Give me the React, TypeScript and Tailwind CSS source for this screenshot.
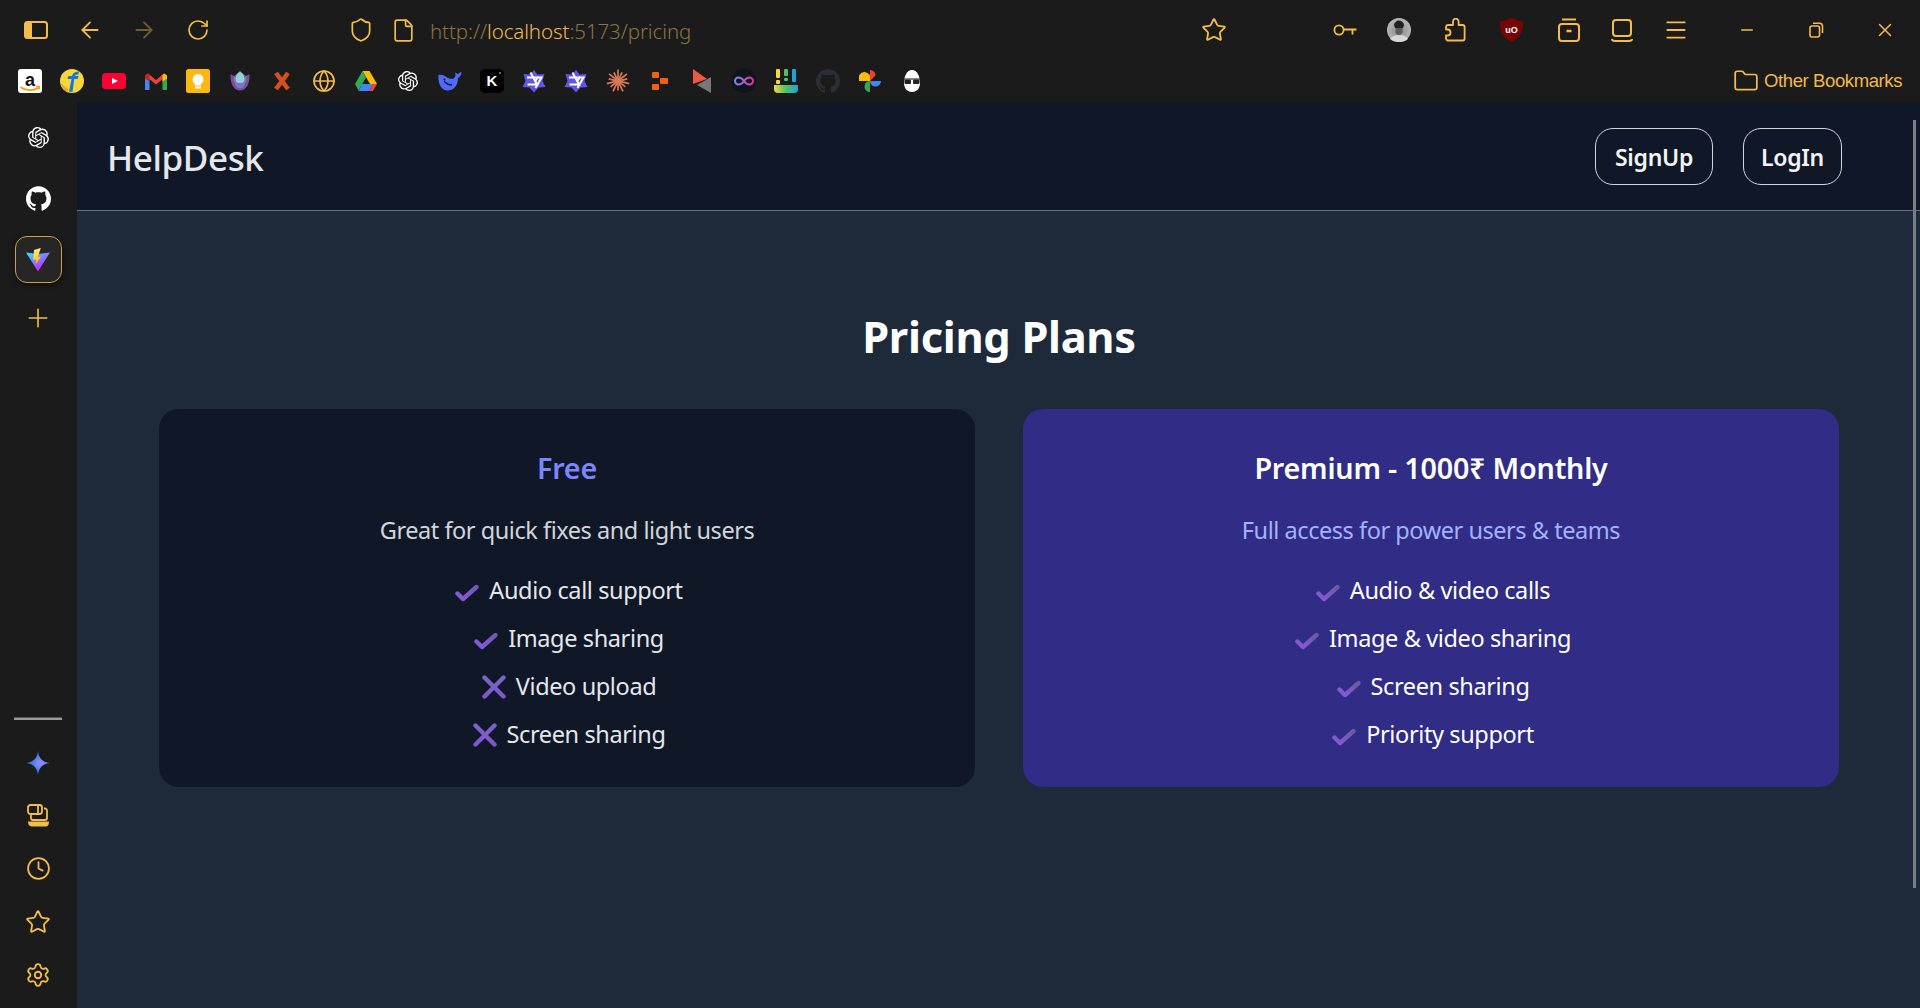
import React from "react";
import { ArrowLeft, ArrowRight, RotateCw, Shield, File, Star, Menu, Minus, X, Folder, Plus, Clock, Settings, Globe } from "lucide-react";
import { SiOpenai, SiGithub } from "react-icons/si";

const GOLD = "#f4bc4b";

function Slot({ w, children }: { w: string; children: React.ReactNode }) {
  return <div className={`${w} flex h-full shrink-0 items-center justify-center`}>{children}</div>;
}

function PanelIcon() {
  return (
    <svg width="24" height="18" viewBox="0 0 24 18" fill="none">
      <rect x="1" y="1" width="22" height="16" rx="2.5" stroke={GOLD} strokeWidth="2" />
      <rect x="1" y="1" width="7" height="16" rx="1.5" fill={GOLD} />
    </svg>
  );
}

function KeyIcon() {
  return (
    <svg width="24" height="12" viewBox="0 0 24 12" fill="none" stroke={GOLD} strokeWidth="1.8">
      <circle cx="6" cy="6" r="4.6" />
      <path d="M10.6 5.5H23.5M19.5 5.5V10.5" />
    </svg>
  );
}

function PuzzleIcon() {
  return (
    <svg width="21" height="24" viewBox="0 0 21 24" fill="none" stroke={GOLD} strokeWidth="1.800" strokeLinejoin="round">
      <path d="M8 7V3.500a2.800 2.800 0 0 1 5.600 0V7h4a2 2 0 0 1 2 2v11.500a2 2 0 0 1-2 2H3a2 2 0 0 1-2-2V17.500h1.500a3 3 0 0 0 0-6H1V9a2 2 0 0 1 2-2z" />
    </svg>
  );
}

function Avatar() {
  return (
    <svg width="24" height="24" viewBox="0 0 24 24">
      <defs>
        <radialGradient id="av" cx="50%" cy="55%" r="60%">
          <stop offset="0%" stopColor="#8a8a8a" />
          <stop offset="100%" stopColor="#bdbdbd" />
        </radialGradient>
      </defs>
      <circle cx="12" cy="12" r="12" fill="url(#av)" />
      <path d="M7 7c1-6 9-6 10 0l-1 3H8z" fill="#222" />
      <path d="M8.500 10h7v5l-3.500 3-3.500-3z" fill="#5d5d5d" />
      <path d="M3 21c2-3 5-4 9-4s7 1 9 4c-4 4-14 4-18 0z" fill="#d8d8d8" />
    </svg>
  );
}

function UBlock() {
  return (
    <svg width="23" height="24" viewBox="0 0 23 24">
      <path d="M11.500 0 23 4c0 9-2 15-11.500 20C2 19 0 13 0 4z" fill="#7a0505" />
      <text x="11.500" y="14.500" textAnchor="middle" fontSize="9" fontWeight="700" fill="#fff" fontFamily="Liberation Sans, sans-serif">uO</text>
    </svg>
  );
}

function ArchiveIcon() {
  return (
    <svg width="24" height="24" viewBox="0 0 24 24" fill="none" stroke={GOLD} strokeWidth="2">
      <path d="M5 1.500h14" />
      <path d="M5 6h14a3 3 0 0 1 3 3v11a3 3 0 0 1-3 3H5a3 3 0 0 1-3-3V9a3 3 0 0 1 3-3z" />
      <path d="M9.500 13h5" strokeWidth="2.500" />
    </svg>
  );
}

function TabletIcon() {
  return (
    <svg width="22" height="23" viewBox="0 0 22 23" fill="none" stroke={GOLD} strokeWidth="2">
      <rect x="2" y="1" width="18" height="16" rx="3" />
      <path d="M1 20c0 1 1 2 3 2h14c2 0 3-1 3-2" />
    </svg>
  );
}

function Restore() {
  return (
    <svg width="15" height="16" viewBox="0 0 15 16" fill="none" stroke={GOLD} strokeWidth="1.600">
      <rect x="1" y="4" width="9.500" height="11" rx="2" />
      <path d="M4 1.200h6.500a3 3 0 0 1 3 3V11" />
    </svg>
  );
}

/* ---- bookmarks ---- */
function Amazon() {
  return (
    <svg width="24" height="24" viewBox="0 0 24 24">
      <rect width="24" height="24" rx="3" fill="#fff" />
      <text x="12" y="16.500" textAnchor="middle" fontSize="18" fontWeight="700" fill="#111" fontFamily="Liberation Sans, sans-serif">a</text>
      <path d="M3 18.500c5 3.500 12 3.500 17 .5" fill="none" stroke="#f90" strokeWidth="1.800" strokeLinecap="round" />
      <path d="M18 17.500h3.200v3" fill="none" stroke="#f90" strokeWidth="1.300" />
    </svg>
  );
}
function Flipkart() {
  return (
    <svg width="24" height="24" viewBox="0 0 24 24">
      <circle cx="12" cy="12" r="12" fill="#fbd63a" />
      <path d="M0.500 14A12 12 0 0 0 8 23.500L8 20 z" fill="#d8b030" />
      <path d="M9 22.500 11.500 10H7.500L8.300 7H12c.8-3 3-4.500 7-4.500l-.6 3c-2 0-3 .5-3.400 1.500h3.500l-.7 3h-3.500L12.500 23z" fill="#1677d9" />
    </svg>
  );
}
function YouTube() {
  return (
    <svg width="24" height="16" viewBox="0 0 24 16">
      <rect width="24" height="16" rx="3.500" fill="#ff0033" />
      <path d="M10 5 16 8l-6 3z" fill="#fff" />
    </svg>
  );
}
function Gmail() {
  return (
    <svg width="22" height="17" viewBox="0 0 22 17">
      <path d="M0 2.500V17h4.500V6z" fill="#4285f4" />
      <path d="M22 2.500V17h-4.500V6z" fill="#34a853" />
      <path d="M0 2.500 3 .5 11 7l8-6.500 3 2L11 11.500z" fill="#ea4335" />
      <path d="M19 .5l3 2v3l-4.500 3V2z" fill="#fbbc04" />
      <path d="M3 .5 0 2.500v3l4.500 3V2z" fill="#c5221f" />
    </svg>
  );
}
function Keep() {
  return (
    <svg width="24" height="24" viewBox="0 0 24 24">
      <rect width="24" height="24" rx="2.500" fill="#fbb80f" />
      <path d="M12 5a5.500 5.500 0 0 1 3 10v1.500H9V15a5.500 5.500 0 0 1 3-10z" fill="#fff" />
      <rect x="9" y="17.500" width="6" height="2" fill="#fff" />
    </svg>
  );
}
function Tulip() {
  return (
    <svg width="20" height="20" viewBox="0 0 20 20">
      <path d="M0.500 3c-.5 9 3 16.500 9.500 16.500S20 12 19.500 3L16 5 10 0 4 5z" fill="#7a4f98" />
      <path d="M3.500 5c0 7 2.500 12.500 6.500 12.500S16.500 12 16.500 5L14 7 10 1 6 7z" fill="#7f74c6" />
      <path d="M10 0.500c4 3 5.500 6.500 3.800 10-1 2-6.600 2-7.600 0C4.500 7 6 3.500 10 .5z" fill="#8fd2d4" />
    </svg>
  );
}
function XMark() {
  return (
    <svg width="18" height="18" viewBox="0 0 18 18">
      <path d="M3 1 15 17M15 1 3 17" stroke="#d4501f" strokeWidth="4.500" fill="none" />
    </svg>
  );
}
function Drive() {
  return (
    <svg width="22" height="20" viewBox="0 0 22 20">
      <path d="M7.500 0h7l7.500 13h-7z" fill="#fbbc04" />
      <path d="M7.500 0 0 13l3.500 6.500L11 6.500z" fill="#34a853" />
      <path d="M3.500 20h11L18 13H7z" fill="#4285f4" />
      <path d="M14.500 20H18l4-7h-4.500z" fill="#ea4335" />
    </svg>
  );
}
function Whale() {
  return (
    <svg width="24" height="20" viewBox="0 0 24 20">
      <path d="M0.500 4C4 3 7 5 10 7c3 1.500 6 1 7-1 .6-1.500.5-3 0-4.500l3 1.500 3.500-2.500c0 3-1 5.500-3.500 6.500 0 7-4 12.500-10.500 12.500C3.500 19.500-.5 12 .5 4z" fill="#4d6bfe" />
      <path d="M6 10c2 2.500 5 4 8 4" stroke="#1b1b1b" strokeWidth="1.300" fill="none" />
      <circle cx="6.500" cy="8.500" r="1" fill="#1b1b1b" />
    </svg>
  );
}
function KIcon() {
  return (
    <div className="relative flex h-[24px] w-[24px] items-center justify-center rounded-[5px] bg-black font-['Liberation_Sans',sans-serif] text-[15px] font-bold text-white">
      K
      <span className="absolute right-[3px] top-[3px] h-[2px] w-[2px] rounded-full bg-[#3b9cff]" />
    </div>
  );
}
function Hexa() {
  return (
    <svg width="24" height="24" viewBox="0 0 24 24">
      <path d="M12 1 15.500 5.500 22.500 5 20.500 12 23.500 18 16.500 18.500 12 23.500 7.500 18.500.5 18 3.500 12 1.500 5 8.500 5.500z" fill="#6154e8" />
      <path d="M5 8.500h14.500L13.500 19M8.500 3.500 15 15.500H5.500M16.500 7.500 13 12.500" stroke="#fff" strokeWidth="2" fill="none" />
    </svg>
  );
}
function Burst() {
  const rays = Array.from({ length: 14 }, (_, i) => (i * 360) / 14);
  return (
    <svg width="24" height="24" viewBox="-12 -12 24 24">
      {rays.map((a, i) => (
        <path key={a} d={`M0 -2V${i % 2 ? -9.5 : -11.5}`} stroke="#d97757" strokeWidth="1.700" transform={`rotate(${a})`} />
      ))}
      <circle r="3.500" fill="#d97757" />
    </svg>
  );
}
function OrangeBlocks() {
  return (
    <svg width="16" height="18" viewBox="0 0 16 18" fill="#f26207">
      <rect x="0" y="0" width="7" height="6" rx="1" />
      <rect x="8" y="6" width="8" height="6" rx="1" />
      <rect x="0" y="12" width="7" height="6" rx="1" />
    </svg>
  );
}
function Tris() {
  return (
    <svg width="18" height="24" viewBox="0 0 18 24">
      <path d="M0 0 14 10 0 15z" fill="#ee5a3f" />
      <path d="M18 8V24L4 16z" fill="#777" />
    </svg>
  );
}
function Infinity8() {
  return (
    <svg width="24" height="24" viewBox="0 0 24 24" fill="none">
      <defs>
        <linearGradient id="inf" x1="0" x2="1">
          <stop offset="0%" stopColor="#6f8df0" />
          <stop offset="100%" stopColor="#e92f9c" />
        </linearGradient>
      </defs>
      <circle cx="12" cy="12" r="12" fill="#10141d" />
      <path d="M12 12C10 9 8 8.500 6.500 8.500a3.500 3.500 0 0 0 0 7C8 15.500 10 15 12 12s4-3.500 5.500-3.500a3.500 3.500 0 0 1 0 7C16 15.500 14 15 12 12z" stroke="url(#inf)" strokeWidth="2" />
    </svg>
  );
}
function Bars() {
  return (
    <svg width="24" height="24" viewBox="0 0 24 24">
      <defs>
        <linearGradient id="bg" x1="0" x2="1">
          <stop offset="0%" stopColor="#f4d93a" />
          <stop offset="50%" stopColor="#4cc26a" />
          <stop offset="100%" stopColor="#1aa7d8" />
        </linearGradient>
      </defs>
      <path d="M0 16h24v4a4 4 0 0 1-4 4H4a4 4 0 0 1-4-4z" fill="url(#bg)" />
      <rect x="2" y="0" width="4" height="9" rx="1" fill="#f4d93a" />
      <rect x="2" y="11" width="4" height="4" rx="1" fill="#f4d93a" />
      <rect x="10" y="0" width="4" height="7" rx="1" fill="#4cc26a" />
      <rect x="10" y="9" width="4" height="3" rx="1" fill="#4cc26a" />
      <rect x="18" y="0" width="4" height="13" rx="1" fill="#1aa7d8" />
    </svg>
  );
}
function Photos() {
  return (
    <svg width="22" height="22" viewBox="0 0 22 22">
      <path d="M11 11H0a5.500 5.500 0 0 1 11-5.500z" fill="#fbbc04" />
      <path d="M11 11V0a5.500 5.500 0 0 1 5.500 5.500z" fill="#ea4335" />
      <path d="M11 11h11a5.500 5.500 0 0 1-11 0z" fill="#4285f4" />
      <path d="M11 11v11a5.500 5.500 0 0 1-5.500-5.500A5.500 5.500 0 0 1 11 11z" fill="#34a853" />
    </svg>
  );
}
function Egg() {
  return (
    <svg width="22" height="22" viewBox="0 0 22 22">
      <path d="M11 0c5 0 8 6 8 13 0 5-3 9-8 9s-8-4-8-9c0-7 3-13 8-13z" fill="#fff" />
      <path d="M0 9h22" stroke="#1b1b1b" strokeWidth="1" />
      <rect x="3.500" y="9.500" width="6.500" height="4.500" rx="1" fill="#222" />
      <rect x="12" y="9.500" width="6.500" height="4.500" rx="1" fill="#222" />
    </svg>
  );
}

function ViteIcon() {
  return (
    <svg width="24" height="24" viewBox="0 0 24 24">
      <defs>
        <linearGradient id="v1" x1="0.100" y1="0.100" x2="0.600" y2="0.800">
          <stop offset="0%" stopColor="#41d1ff" />
          <stop offset="100%" stopColor="#bd34fe" />
        </linearGradient>
        <linearGradient id="v2" x1="0.400" y1="0" x2="0.500" y2="1">
          <stop offset="0%" stopColor="#ffea83" />
          <stop offset="50%" stopColor="#ffdd35" />
          <stop offset="100%" stopColor="#ffa800" />
        </linearGradient>
      </defs>
      <path d="M0 4.500 12 6l12-1.500-12 19z" fill="url(#v1)" />
      <path d="M14.500 0 8 2l-.8 10 3-.6-.6 5L15 8.500l-3.200.6 3-9z" fill="url(#v2)" />
    </svg>
  );
}

function Sparkle() {
  return (
    <svg width="24" height="24" viewBox="0 0 24 24">
      <defs>
        <radialGradient id="sp" cx="60%" cy="50%" r="60%">
          <stop offset="0%" stopColor="#a78bfa" />
          <stop offset="55%" stopColor="#3b82f6" />
          <stop offset="100%" stopColor="#2563eb" />
        </radialGradient>
      </defs>
      <path d="M12 0c.8 7 4 11 12 12-8 1-11.200 5-12 12-.8-7-4-11-12-12 8-1 11.200-5 12-12z" fill="url(#sp)" />
    </svg>
  );
}

function DevicesIcon() {
  return (
    <svg width="22" height="23" viewBox="0 0 22 23" fill="none" stroke={GOLD} strokeWidth="1.800">
      <rect x="1" y="1" width="14" height="9" rx="2.500" />
      <path d="M11 2v7" />
      <path d="M4 10v4a2 2 0 0 0 2 2h12a2 2 0 0 0 2-2V6.500c0-1-1-2-2-2h-1" />
      <path d="M2 18.500h19c0 2-1 3-2.500 3h-14C3 21.500 2 20.500 2 18.500z" fill={GOLD} />
    </svg>
  );
}

function Check({ id, premium }: { id: string; premium?: boolean }) {
  return (
    <svg width="24" height="18" viewBox="0 0 24 18" fill="none" className="shrink-0 translate-y-[2px]">
      <defs>
        <linearGradient id={id} x1="0" y1="1" x2="1" y2="0">
          <stop offset="0%" stopColor="#8a58dc" />
          <stop offset="100%" stopColor={premium ? "#6a5a9e" : "#7058b8"} />
        </linearGradient>
      </defs>
      <path d="M2.500 9.500 8 15 21.500 3" stroke={`url(#${id})`} strokeWidth="4.400" strokeLinecap="round" strokeLinejoin="round" />
    </svg>
  );
}

function Cross({ id }: { id: string }) {
  return (
    <svg width="24" height="24" viewBox="0 0 24 24" fill="none" className="shrink-0">
      <defs>
        <linearGradient id={id} x1="0" y1="0" x2="0" y2="1">
          <stop offset="0%" stopColor="#7a62c8" />
          <stop offset="100%" stopColor="#7e56d0" />
        </linearGradient>
      </defs>
      <path d="M2.500 2.500 21.500 21.500M21.500 2.500 2.500 21.500" stroke={`url(#${id})`} strokeWidth="4.400" strokeLinecap="round" />
    </svg>
  );
}

const bookmarks: React.ReactNode[] = [
  <Amazon />, <Flipkart />, <YouTube />, <Gmail />, <Keep />, <Tulip />, <XMark />,
  <Globe size={24} color={GOLD} strokeWidth={1.7} />, <Drive />, <SiOpenai size={20} color="#fff" />, <Whale />, <KIcon />,
  <Hexa />, <Hexa />, <Burst />, <OrangeBlocks />, <Tris />, <Infinity8 />, <Bars />,
  <SiGithub size={24} color="#2a2f36" />, <Photos />, <Egg />,
];

type Feature = { text: string; ok: boolean };
const free: Feature[] = [
  { text: "Audio call support", ok: true },
  { text: "Image sharing", ok: true },
  { text: "Video upload", ok: false },
  { text: "Screen sharing", ok: false },
];
const premium: Feature[] = [
  { text: "Audio & video calls", ok: true },
  { text: "Image & video sharing", ok: true },
  { text: "Screen sharing", ok: true },
  { text: "Priority support", ok: true },
];

function Card({ title, desc, items, isPremium }: { title: string; desc: string; items: Feature[]; isPremium?: boolean }) {
  const k = isPremium ? "p" : "f";
  return (
    <div className={`flex flex-1 flex-col items-center rounded-[20px] pb-[28px] pt-[39px] ${isPremium ? "bg-[#312c85]" : "bg-[#101828]"}`}>
      <h3 className={`h-[40px] text-[28.700px] font-semibold leading-[40px] tracking-[-0.2px] ${isPremium ? "text-white" : "text-[#7c86ff]"}`}>{title}</h3>
      <p className={`mt-[24px] h-[36px] text-[23.500px] leading-[36px] tracking-[-0.45px] ${isPremium ? "text-[#a3b3ff]" : "text-[#d1d5dc]"}`}>{desc}</p>
      <ul className="mt-[19px] flex flex-col items-center pl-[4px]">
        {items.map((it, i) => (
          <li key={it.text} className={`flex h-[48px] items-center gap-[10px] text-[23.500px] tracking-[-0.38px] ${isPremium ? "text-white" : "text-[#e5e7eb]"}`}>
            {it.ok ? <Check id={`c${k}${i}`} premium={isPremium} /> : <Cross id={`x${k}${i}`} />}
            <span>{it.text}</span>
          </li>
        ))}
      </ul>
    </div>
  );
}

export default function App() {
  return (
    <div className="flex h-[1008px] w-full flex-col overflow-hidden bg-[#1b1b1b] font-['Noto_Sans',sans-serif]">
      {/* browser toolbar */}
      <div className="flex h-[60px] shrink-0 items-center pl-[9px]">
        <Slot w="w-[54px]"><PanelIcon /></Slot>
        <Slot w="w-[54px]"><ArrowLeft size={26} color={GOLD} strokeWidth={1.700} /></Slot>
        <Slot w="w-[54px]"><ArrowRight size={26} color="#6f5c30" strokeWidth={1.700} /></Slot>
        <Slot w="w-[54px]"><RotateCw size={24} color={GOLD} strokeWidth={1.700} /></Slot>
        <div className="ml-[115px] flex h-full items-center">
          <Slot w="w-[42px]"><Shield size={26} color={GOLD} strokeWidth={1.600} /></Slot>
          <Slot w="w-[42px]"><File size={25} color={GOLD} strokeWidth={1.600} /></Slot>
        </div>
        <div className="ml-[6px] w-[760px] pt-[3px] text-[20.500px] font-light tracking-[-0.1px] text-[#8a7440]">
          http://<span className="text-[#f0b94c]">localhost</span>:5173/pricing
        </div>
        <Slot w="w-[48px]"><Star size={26} color={GOLD} strokeWidth={1.700} /></Slot>
        <div className="ml-auto flex h-full items-center">
          <Slot w="w-[44px]"><KeyIcon /></Slot>
          <Slot w="w-[64px]"><Avatar /></Slot>
          <Slot w="w-[48px]"><PuzzleIcon /></Slot>
          <Slot w="w-[64px]"><UBlock /></Slot>
          <Slot w="w-[52px]"><ArchiveIcon /></Slot>
          <Slot w="w-[54px]"><TabletIcon /></Slot>
          <Slot w="w-[54px]"><Menu size={26} color={GOLD} strokeWidth={1.700} /></Slot>
          <Slot w="w-[9px]"><span /></Slot>
          <Slot w="w-[70px]"><Minus size={18} color={GOLD} strokeWidth={2} /></Slot>
          <Slot w="w-[68px]"><Restore /></Slot>
          <Slot w="w-[70px]"><X size={22} color={GOLD} strokeWidth={1.600} /></Slot>
        </div>
      </div>

      {/* bookmarks bar */}
      <div className="flex h-[42px] shrink-0 items-center pl-[9px]">
        {bookmarks.map((b, i) => (
          <Slot key={i} w="w-[42px]">{b}</Slot>
        ))}
        <div className="ml-auto flex items-center gap-[5px] pr-[18px] font-['Liberation_Sans',sans-serif] text-[18.500px] tracking-[-0.4px] text-[#f0b94c]">
          <Folder size={26} color={GOLD} strokeWidth={1.600} />
          <span>Other Bookmarks</span>
        </div>
      </div>

      <div className="flex min-h-0 flex-1">
        {/* sidebar */}
        <aside className="flex w-[77px] shrink-0 flex-col items-center pr-[1px] pt-[5px]">
          <div className="flex h-[61px] items-center justify-center"><SiOpenai size={21} color="#fff" /></div>
          <div className="flex h-[61px] items-center justify-center"><SiGithub size={25} color="#fff" /></div>
          <div className="flex h-[61px] items-center justify-center">
            <div className="flex h-[47px] w-[47px] items-center justify-center rounded-[12px] border border-[#d0a044] bg-[#262626] shadow-[0_2px_6px_rgba(0,0,0,0.5)]">
              <ViteIcon />
            </div>
          </div>
          <div className="flex h-[56px] items-center justify-center"><Plus size={30} color={GOLD} strokeWidth={1.300} /></div>
          <div className="mt-auto h-[3px] w-[48px] border-t border-[#5c554a] bg-[#9a9aa0]" />
          <div className="mt-[16px] flex flex-col items-center pb-[7px]">
            <div className="flex h-[53px] items-center justify-center"><Sparkle /></div>
            <div className="flex h-[53px] items-center justify-center"><DevicesIcon /></div>
            <div className="flex h-[53px] items-center justify-center"><Clock size={25} color={GOLD} strokeWidth={1.700} /></div>
            <div className="flex h-[53px] items-center justify-center"><Star size={26} color={GOLD} strokeWidth={1.700} /></div>
            <div className="flex h-[53px] items-center justify-center"><Settings size={26} color={GOLD} strokeWidth={1.700} /></div>
          </div>
        </aside>

        {/* page */}
        <main className="relative flex min-w-0 flex-1 flex-col bg-[#1e2939]">
          <header className="flex h-[109px] shrink-0 items-center justify-between border-b border-[#6a7282] bg-[#101828] pl-[30px] pr-[78px]">
            <span className="pt-[5px] text-[35px] font-medium tracking-[-0.4px] text-[#e5e7eb]">HelpDesk</span>
            <div className="flex items-center gap-[30px]">
              <button className="flex h-[57px] w-[118px] items-center justify-center rounded-[18px] border border-[#d1d5dc] pt-[2px] text-[23px] font-semibold tracking-[-0.3px] text-[#f3f4f6]">SignUp</button>
              <button className="flex h-[57px] w-[99px] items-center justify-center rounded-[18px] border border-[#d1d5dc] pt-[2px] text-[23px] font-semibold tracking-[-0.3px] text-[#f3f4f6]">LogIn</button>
            </div>
          </header>
          <section className="flex flex-col items-center pl-[82px] pr-[81px] pt-[98px]">
            <h2 className="h-[56px] text-[43.400px] font-bold leading-[56px] tracking-[-0.3px] text-white">Pricing Plans</h2>
            <div className="mt-[44px] flex w-full gap-[48px]">
              <Card title="Free" desc="Great for quick fixes and light users" items={free} />
              <Card title="Premium - 1000₹ Monthly" desc="Full access for power users & teams" items={premium} isPremium />
            </div>
          </section>
          <div className="absolute right-[4px] top-[18px] h-[768px] w-[3px] bg-[#7a7f87]" />
        </main>
      </div>
    </div>
  );
}
